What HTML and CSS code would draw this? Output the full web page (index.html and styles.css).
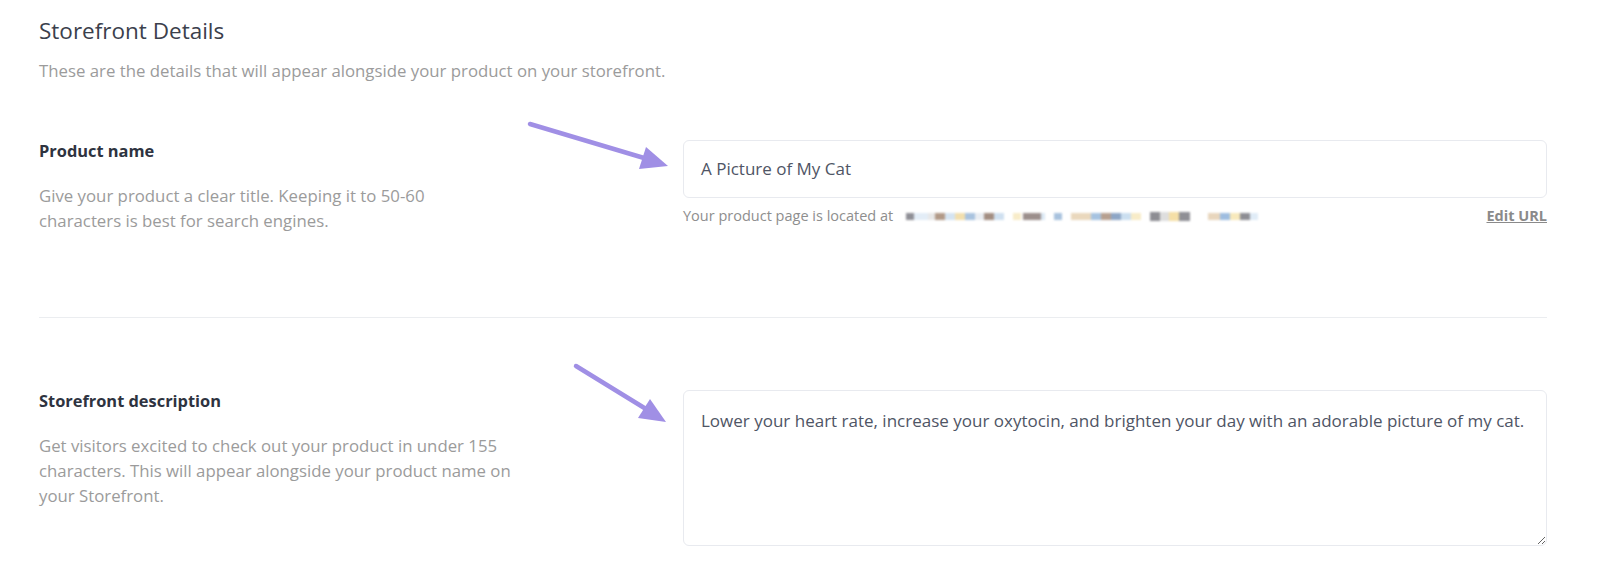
FILE: index.html
```html
<!doctype html>
<html lang="en">
<head>
	<meta charset="UTF-8">
	<title>Storefront Details</title>
	<link rel="stylesheet" href="styles.css">
</head>
<body>
	<div class="page">
		<!-- 标题 -->
		<div class="head">
			<h2>Storefront Details</h2>
			<p>These are the details that will appear alongside your product on your storefront.</p>
		</div>

		<!-- 商品名称 -->
		<div class="row row-name">
			<div class="label">
				<h4>Product name</h4>
				<p>Give your product a clear title. Keeping it to 50-60<br>characters is best for search engines.</p>
			</div>
			<div class="field">
				<div class="input">A Picture of My Cat</div>
				<div class="hint">
					<span class="hint-text">Your product page is located at</span>
					<!-- 打码的链接 -->
					<span class="url">
						<b class="g1"></b>
						<b class="g2"></b>
						<b class="g3"></b>
						<b class="g4"></b>
						<b class="g5"></b>
						<b class="g6"></b>
					</span>
					<a href="#" class="edit">Edit URL</a>
				</div>
			</div>
		</div>

		<div class="line"></div>

		<!-- 商店描述 -->
		<div class="row row-desc">
			<div class="label">
				<h4>Storefront description</h4>
				<p>Get visitors excited to check out your product in under 155 characters. This will appear alongside your product name on your Storefront.</p>
			</div>
			<div class="field">
				<textarea class="textarea">Lower your heart rate, increase your oxytocin, and brighten your day with an adorable picture of my cat.</textarea>
			</div>
		</div>

		<!-- 箭头标注 -->
		<svg class="arrows" width="1600" height="584" viewBox="0 0 1600 584">
			<line x1="530" y1="124" x2="644" y2="158" stroke="#a08fe5" stroke-width="4.5" stroke-linecap="round"/>
			<polygon points="668,166 639,169 646,147" fill="#a08fe5"/>
			<line x1="576" y1="366" x2="646" y2="409" stroke="#a08fe5" stroke-width="4.5" stroke-linecap="round"/>
			<polygon points="666,422 638,418 650,399" fill="#a08fe5"/>
		</svg>
	</div>
</body>
</html>
```

FILE: styles.css
```css
* {
	margin: 0px;
	padding: 0px;
	box-sizing: border-box;
}

body {
	background: #fff;
	font-family: "Open Sans", Lato, sans-serif;
	color: #3a3f4b;
}

.page {
	position: relative;
	width: 1600px;
	height: 584px;
	padding: 18px 53px 0 39px;
}

.head h2 {
	font-size: 22.5px;
	font-weight: normal;
	line-height: 26px;
	color: #3b404c;
}

.head p {
	margin-top: 17px;
	font-size: 16.8px;
	line-height: 20px;
	color: #9b9b9b;
}

.row {
	display: flex;
}

.label {
	width: 644px;
	flex: none;
}

.label h4 {
	font-size: 16.4px;
	font-weight: bold;
	line-height: 20px;
	color: #2e3340;
}

.label p {
	width: 480px;
	margin-top: 22px;
	font-size: 16.8px;
	line-height: 25px;
	color: #9b9b9b;
}

.field {
	flex: 1;
}

.row-name {
	margin-top: 59px;
}

.row-name .label {
	padding-top: 1px;
}

.input {
	height: 58px;
	padding: 0 17px;
	border: 1px solid #e8eaef;
	border-radius: 6px;
	font-size: 17px;
	line-height: 56px;
	color: #4f5565;
}

.hint {
	display: flex;
	align-items: center;
	margin-top: 8px;
	font-size: 14.5px;
	line-height: 20px;
	color: #8e8e8e;
}

.url {
	display: flex;
	align-items: center;
	margin-left: 13px;
	filter: blur(0.9px);
}

.url b {
	display: block;
	height: 7px;
	margin-right: 9px;
}

.url .g1 {
	width: 98px;
	background: linear-gradient(to right, #8f8f96 0 8px, #e3edf7 8px 22px, #e8e8e8 22px 29px, #b29a88 29px 39px, #d5e4f2 39px 49px, #f2dfae 49px 59px, #a9c3df 59px 69px, #e9edf2 69px 78px, #a38e82 78px 88px, #cfe0f0 88px);
}

.url .g2 {
	width: 32px;
	background: linear-gradient(to right, #f8ecc9 0 8px, #fff 8px 10px, #9c8f8c 10px 28px, #dbe8f4 28px);
}

.url .g3 {
	width: 8px;
	background: #a8c2de;
}

.url .g4 {
	width: 70px;
	background: linear-gradient(to right, #ead8bd 0 20px, #a6c3e1 20px 30px, #b7a090 30px 40px, #8ea6c6 40px 50px, #cbdff0 50px 60px, #f8ecc8 60px);
}

.url .g5 {
	width: 40px;
	height: 9px;
	margin-right: 18px;
	background: linear-gradient(to right, #8d8d93 0 10px, #dedede 10px 19px, #f5dfa6 19px 29px, #8f8f95 29px);
}

.url .g6 {
	width: 50px;
	background: linear-gradient(to right, #e8d6bd 0 12px, #9ebde0 12px 22px, #f8e9bc 22px 32px, #8e8e94 32px 42px, #e0ecf7 42px);
}

.edit {
	margin-left: auto;
	font-weight: bold;
	color: #8a8a8a;
	text-decoration: underline;
}

.line {
	height: 1px;
	margin-top: 84px;
	background: #ebedf0;
}

.row-desc {
	margin-top: 72px;
}

.row-desc .label {
	padding-top: 1px;
}

.textarea {
	display: block;
	width: 100%;
	height: 156px;
	padding: 19px 17px;
	border: 1px solid #e8eaef;
	border-radius: 6px;
	font-family: "Open Sans", Lato, sans-serif;
	font-size: 17px;
	line-height: 22px;
	color: #4f5565;
	resize: vertical;
	outline: none;
}

.arrows {
	position: absolute;
	left: 0px;
	top: 0px;
	pointer-events: none;
}
```
